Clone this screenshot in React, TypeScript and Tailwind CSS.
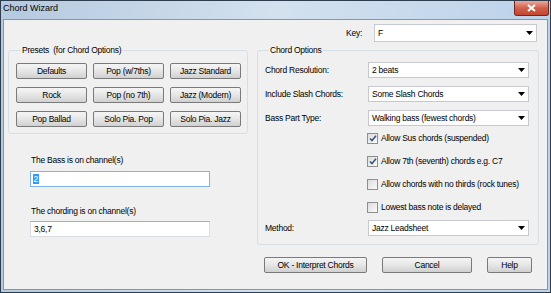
import React from 'react';

const font = { fontFamily: '"Liberation Sans", Arial, sans-serif' };

const Arrow = () => (
  <svg width="7" height="4" viewBox="0 0 7 4" className="shrink-0">
    <path d="M0 0 H7 L3.5 4 Z" fill="#000" />
  </svg>
);

const Combo = ({ value, w, h = 'h-[16px]' }: { value: string; w: string; h?: string }) => (
  <div className={`${w} ${h} flex items-center justify-between bg-white border border-[#c7c9cf] pl-[3px] pr-[3px]`}>
    <span className="text-[8.5px] tracking-[-0.25px] text-black leading-none">{value}</span>
    <Arrow />
  </div>
);

const Btn = ({ label, w }: { label: string; w: string }) => (
  <div
    className={`${w} h-[16px] flex items-center justify-center rounded-[2px] border border-[#7a7a7a] bg-gradient-to-b from-[#f5f5f5] via-[#e6e6e6] to-[#d0d0d0] text-[8.5px] tracking-[-0.25px] text-black leading-none`}
  >
    {label}
  </div>
);

const Check = ({ label, checked }: { label: string; checked?: boolean }) => (
  <div className="h-[13px] flex items-center gap-[3px]">
    <div className="w-[11px] h-[11px] border border-[#8e8f8f] bg-gradient-to-br from-[#dcdcdc] to-[#fbfbfb] flex items-center justify-center">
      {checked && (
        <svg width="8" height="7" viewBox="0 0 8 7">
          <path d="M1 3.5 L3 5.5 L7 0.8" stroke="#3b5478" strokeWidth="1.6" fill="none" />
        </svg>
      )}
    </div>
    <span className="text-[8.5px] tracking-[-0.25px] text-black leading-none">{label}</span>
  </div>
);

const Row = ({ label, value, mt }: { label: string; value: string; mt: string }) => (
  <div className={`${mt} flex items-center`}>
    <span className="w-[103px] text-[8.5px] tracking-[-0.25px] text-black leading-none">{label}</span>
    <Combo value={value} w="w-[161px]" />
  </div>
);

export default function App() {
  return (
    <div
      style={font}
      className="w-[551px] h-[293px] flex flex-col border border-[#2e3d4e] bg-gradient-to-r from-[#b5c9df] via-[#d3e1ef] to-[#bcd2ea] overflow-hidden"
    >
      <div className="h-[18px] flex items-start justify-between">
        <span className="mt-[3px] ml-[2px] text-[9px] text-black leading-none">Chord Wizard</span>
        <div className="mr-[1px] w-[35px] h-[15px] rounded-b-[3px] border border-t-0 border-[#6b2a22] bg-gradient-to-b from-[#e9a99c] via-[#d0604d] to-[#c4442f] flex items-center justify-center">
          <svg width="9" height="8" viewBox="0 0 9 8">
            <path d="M1 1 L8 7 M8 1 L1 7" stroke="#fff" strokeWidth="2" />
          </svg>
        </div>
      </div>

      <div className="flex-1 mx-[2px] mb-[2px] border border-[#8396ad] bg-[#f0f0f0] flex flex-col">
        <div className="mt-[4px] h-[18px] flex items-center justify-end pr-[10px]">
          <span className="mr-[12px] text-[8.5px] tracking-[-0.25px] text-black leading-none">Key:</span>
          <Combo value="F" w="w-[163px]" h="h-[18px]" />
        </div>

        <div className="mt-[2px] flex items-start">
          <div className="ml-[4px] w-[240px] flex flex-col">
            <fieldset className="border border-[#d5dfe5] rounded-[3px] pl-[7px] pt-[7px] pb-[6px]">
              <legend className="ml-[5px] px-[1px] text-[8.5px] tracking-[-0.25px] leading-[12px] text-black whitespace-pre">
                Presets  (for Chord Options)
              </legend>
              <div className="grid grid-cols-[71px_71px_71px] gap-x-[6px] gap-y-[8px]">
                <Btn label="Defaults" w="w-[71px]" />
                <Btn label="Pop (w/7ths)" w="w-[71px]" />
                <Btn label="Jazz Standard" w="w-[71px]" />
                <Btn label="Rock" w="w-[71px]" />
                <Btn label="Pop (no 7th)" w="w-[71px]" />
                <Btn label="Jazz (Modern)" w="w-[71px]" />
                <Btn label="Pop Ballad" w="w-[71px]" />
                <Btn label="Solo Pia. Pop" w="w-[71px]" />
                <Btn label="Solo Pia. Jazz" w="w-[71px]" />
              </div>
            </fieldset>

            <span className="mt-[20px] ml-[23px] h-[12px] flex items-center text-[8.5px] tracking-[-0.25px] text-black leading-none">
              The Bass is on channel(s)
            </span>
            <div className="mt-[5px] ml-[22px] w-[180px] h-[16px] bg-white border border-[#7eb4ea] flex items-center pl-[2px]">
              <span className="bg-[#3399ff] text-white text-[8.5px] leading-[10px] px-[0.5px]">2</span>
            </div>

            <span className="mt-[18px] ml-[23px] h-[12px] flex items-center text-[8.5px] tracking-[-0.25px] text-black leading-none">
              The chording is on channel(s)
            </span>
            <div className="mt-[4px] ml-[22px] w-[180px] h-[16px] bg-white border border-[#d9dde3] border-t-[#abadb3] flex items-center pl-[3px]">
              <span className="text-[8.5px] tracking-[-0.25px] text-black leading-none">3,6,7</span>
            </div>
          </div>

          <fieldset className="ml-[9px] w-[282px] border border-[#d5dfe5] rounded-[3px] pl-[7px] pb-[8px]">
            <legend className="ml-[4px] px-[1px] text-[8.5px] tracking-[-0.25px] leading-[12px] text-black">Chord Options</legend>
            <Row mt="mt-[6px]" label="Chord Resolution:" value="2 beats" />
            <Row mt="mt-[8px]" label="Include Slash Chords:" value="Some Slash Chords" />
            <Row mt="mt-[8px]" label="Bass Part Type:" value="Walking bass (fewest chords)" />
            <div className="mt-[6px] ml-[102px] flex flex-col gap-[10px]">
              <Check label="Allow Sus chords (suspended)" checked />
              <Check label="Allow 7th (seventh) chords e.g. C7" checked />
              <Check label="Allow chords with no thirds (rock tunes)" />
              <Check label="Lowest bass note is delayed" />
            </div>
            <Row mt="mt-[6px]" label="Method:" value="Jazz Leadsheet" />
          </fieldset>
        </div>

        <div className="mt-[12px] flex justify-end pr-[15px] gap-[15px]">
          <Btn label="OK - Interpret Chords" w="w-[103px]" />
          <Btn label="Cancel" w="w-[90px]" />
          <Btn label="Help" w="w-[45px]" />
        </div>
      </div>
    </div>
  );
}
